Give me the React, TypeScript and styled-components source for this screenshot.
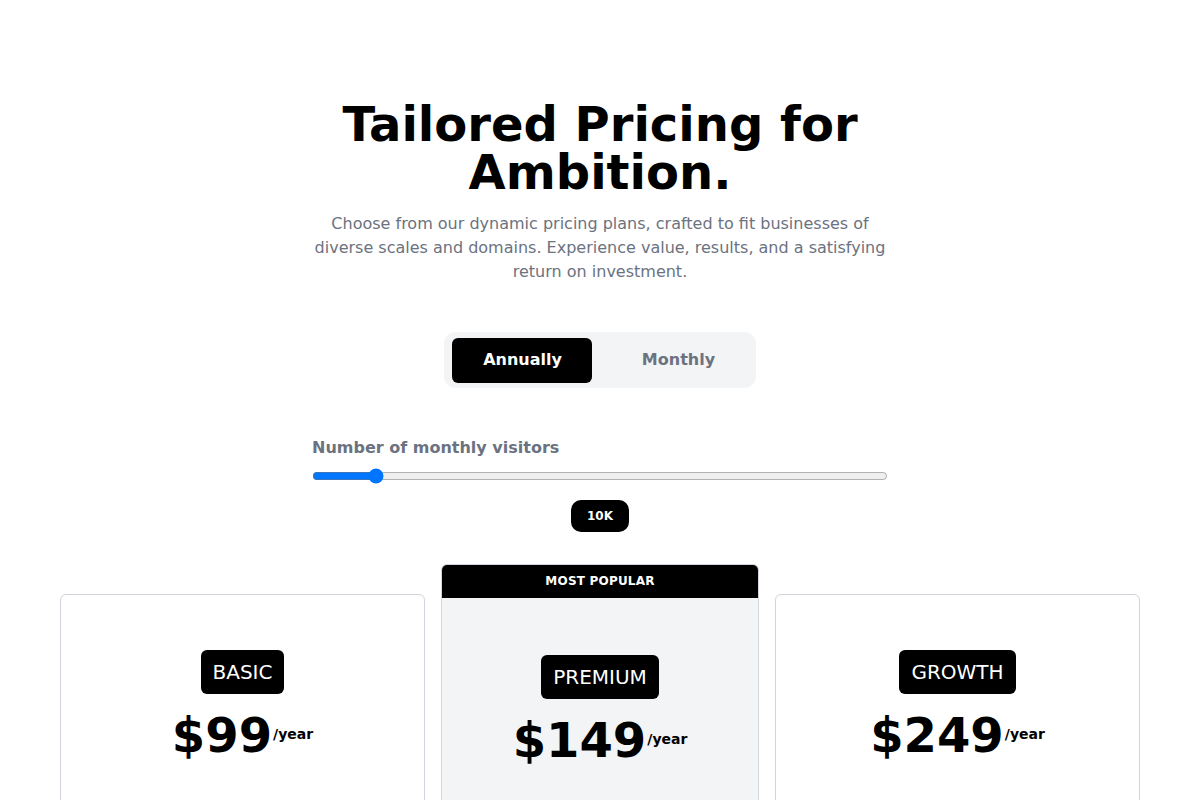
import { useState } from "react";
import styled, { createGlobalStyle } from "styled-components";

const GlobalStyle = createGlobalStyle`
  * {
    box-sizing: border-box;
  }
  body {
    margin: 0;
    background: #ffffff;
    font-family: "DejaVu Sans", "Noto Sans", sans-serif;
    color: #000000;
  }
`;

const Page = styled.div`
  padding: 100px 60px 0;
  display: flex;
  flex-direction: column;
  align-items: center;
`;

const Header = styled.div`
  width: 576px;
  display: flex;
  flex-direction: column;
  align-items: center;
  text-align: center;
`;

const Title = styled.h1`
  margin: 0;
  font-size: 48px;
  line-height: 48px;
  font-weight: 700;
`;

const Lead = styled.p`
  margin: 16px 0 0;
  font-size: 16px;
  line-height: 24px;
  color: #6b7280;
`;

const Toggle = styled.div`
  margin-top: 48px;
  display: flex;
  gap: 16px;
  padding: 6px 8px 5px;
  background: #f3f4f6;
  border-radius: 12px;
`;

const ToggleButton = styled.button<{ $active: boolean }>`
  width: 140px;
  height: 45px;
  padding: 0 0 2px 1px;
  border: none;
  border-radius: 6px;
  font-family: inherit;
  font-size: 16px;
  font-weight: 700;
  cursor: pointer;
  background: ${(p) => (p.$active ? "#000000" : "transparent")};
  color: ${(p) => (p.$active ? "#ffffff" : "#6b7280")};
`;

const SliderBlock = styled.div`
  width: 576px;
  margin-top: 48px;
  display: flex;
  flex-direction: column;
  align-items: center;
`;

const SliderLabel = styled.label`
  align-self: flex-start;
  font-size: 16px;
  line-height: 24px;
  font-weight: 700;
  color: #6b7280;
`;

const Range = styled.input`
  display: block;
  width: 100%;
  height: 16px;
  margin: 8px 0 0;
`;

const ValuePill = styled.div`
  margin-top: 16px;
  width: 58px;
  height: 32px;
  border-radius: 10px;
  background: #000000;
  color: #ffffff;
  font-size: 12px;
  font-weight: 700;
  display: flex;
  align-items: center;
  justify-content: center;
`;

const Plans = styled.div`
  width: 100%;
  margin-top: 32px;
  display: grid;
  grid-template-columns: 1fr 318px 1fr;
  gap: 16px;
  align-items: start;
`;

const Card = styled.div<{ $featured?: boolean }>`
  margin-top: ${(p) => (p.$featured ? "0" : "30px")};
  height: ${(p) => (p.$featured ? "260px" : "230px")};
  border: 1px solid #d1d5db;
  border-radius: 6px;
  background: ${(p) => (p.$featured ? "#f3f4f6" : "#ffffff")};
  overflow: hidden;
  display: flex;
  flex-direction: column;
`;

const Ribbon = styled.div`
  height: 34px;
  margin: -1px -1px 0;
  background: #000000;
  color: #ffffff;
  font-size: 12px;
  font-weight: 700;
  display: flex;
  align-items: center;
  justify-content: center;
  letter-spacing: 0.2px;
`;

const CardBody = styled.div<{ $featured?: boolean }>`
  padding-top: ${(p) => (p.$featured ? "57px" : "55px")};
  display: flex;
  flex-direction: column;
  align-items: center;
`;

const PlanName = styled.div`
  padding: 8px 12px;
  background: #000000;
  color: #ffffff;
  border-radius: 6px;
  font-size: 20px;
  line-height: 28px;
`;

const PriceRow = styled.div`
  margin-top: 17px;
  height: 48px;
  display: flex;
  align-items: center;
  gap: 1px;
`;

const Amount = styled.span`
  font-size: 48px;
  line-height: 48px;
  font-weight: 700;
`;

const Period = styled.span`
  font-size: 14px;
  font-weight: 700;
  margin-top: -2px;
`;

const plans = [
  { name: "BASIC", price: 99 },
  { name: "PREMIUM", price: 149, featured: true },
  { name: "GROWTH", price: 249 },
];

export default function App() {
  const [billing, setBilling] = useState<"annual" | "monthly">("annual");
  const [visitors, setVisitors] = useState(10);

  return (
    <>
      <GlobalStyle />
      <Page>
        <Header>
          <Title>Tailored Pricing for Ambition.</Title>
          <Lead>
            Choose from our dynamic pricing plans, crafted to fit businesses of
            diverse scales and domains. Experience value, results, and a
            satisfying return on investment.
          </Lead>
        </Header>

        <Toggle>
          <ToggleButton
            $active={billing === "annual"}
            onClick={() => setBilling("annual")}
          >
            Annually
          </ToggleButton>
          <ToggleButton
            $active={billing === "monthly"}
            onClick={() => setBilling("monthly")}
          >
            Monthly
          </ToggleButton>
        </Toggle>

        <SliderBlock>
          <SliderLabel htmlFor="visitors">Number of monthly visitors</SliderLabel>
          <Range
            id="visitors"
            type="range"
            min={0}
            max={100}
            value={visitors}
            onChange={(e) => setVisitors(Number(e.target.value))}
          />
          <ValuePill>{visitors}K</ValuePill>
        </SliderBlock>

        <Plans>
          {plans.map((plan) => (
            <Card key={plan.name} $featured={plan.featured}>
              {plan.featured && <Ribbon>MOST POPULAR</Ribbon>}
              <CardBody $featured={plan.featured}>
                <PlanName>{plan.name}</PlanName>
                <PriceRow>
                  <Amount>${plan.price}</Amount>
                  <Period>/{billing === "annual" ? "year" : "month"}</Period>
                </PriceRow>
              </CardBody>
            </Card>
          ))}
        </Plans>
      </Page>
    </>
  );
}
